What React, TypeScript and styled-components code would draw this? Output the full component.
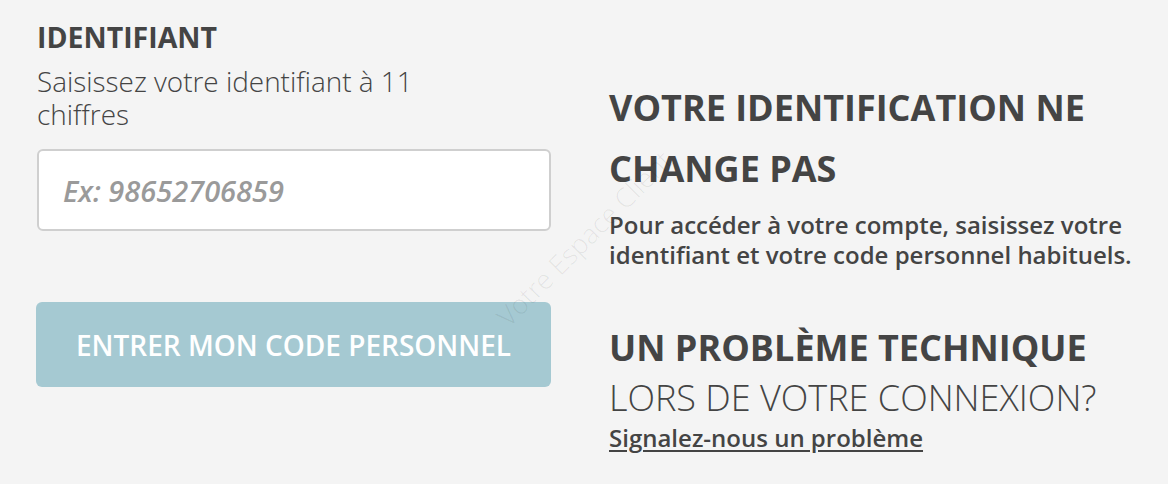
import React from "react";
import styled, { createGlobalStyle } from "styled-components";

const Global = createGlobalStyle`
  html, body { margin: 0; padding: 0; background: #f4f4f4; }
  body { font-family: "Open Sans", "Liberation Sans", sans-serif; color: #444; }
  * { box-sizing: border-box; }
`;

const Page = styled.div`
  position: relative;
  width: 1168px;
  height: 484px;
  overflow: hidden;
  display: flex;
  gap: 58px;
  padding: 17px 0 0 37px;
`;

const FormColumn = styled.div`
  width: 514px;
  flex-shrink: 0;
  display: flex;
  flex-direction: column;
`;

const FieldTitle = styled.div`
  font-size: 28.5px;
  font-weight: 700;
  line-height: 40px;
`;

const FieldHint = styled.div`
  font-size: 27.9px;
  font-weight: 300;
  line-height: 33px;
  max-width: 440px;
  margin-top: 8px;
`;

const Input = styled.input`
  margin-top: 18px;
  height: 82px;
  width: 100%;
  border: 2px solid #cfcfcf;
  border-radius: 6px;
  background: #fff;
  padding: 0 24px;
  font-family: "Open Sans", "Liberation Sans", sans-serif;
  font-size: 29px;
  color: #444;
  outline: none;
  &::placeholder {
    color: #9a9a9a;
    font-style: italic;
    font-weight: 600;
  }
`;

const SubmitButton = styled.button`
  margin-top: 71px;
  margin-left: -1px;
  height: 85px;
  width: 515px;
  border: none;
  border-radius: 6px;
  background: #a5c9d2;
  color: #fff;
  font-family: "Open Sans", "Liberation Sans", sans-serif;
  font-size: 28px;
  font-weight: 600;
`;

const InfoColumn = styled.div`
  flex: 1;
  display: flex;
  flex-direction: column;
  padding-top: 60px;
`;

const Heading = styled.div`
  font-size: 36px;
  font-weight: 700;
  line-height: 61px;
`;

const Paragraph = styled.p`
  margin: 11px 0 0;
  font-size: 24px;
  font-weight: 600;
  line-height: 30px;
`;

const HelpBlock = styled.div`
  margin-top: 53px;
  display: flex;
  flex-direction: column;
  align-items: flex-start;
`;

const HelpTitle = styled.div`
  font-size: 36px;
  font-weight: 700;
  line-height: 50px;
`;

const HelpSub = styled.div`
  font-size: 36px;
  font-weight: 300;
  line-height: 50px;
`;

const HelpLink = styled.a`
  font-size: 24px;
  font-weight: 600;
  line-height: 30px;
  color: #444;
  text-decoration: underline;
  text-underline-offset: 3px;
`;

const Watermark = styled.div`
  position: absolute;
  left: 584px;
  top: 238px;
  font-size: 27px;
  font-weight: 300;
  color: rgba(0, 0, 0, 0.07);
  transform: translate(-50%, -50%) rotate(-45deg);
  white-space: nowrap;
  pointer-events: none;
`;

export default function App() {
  return (
    <>
      <Global />
      <Page>
        <FormColumn>
          <FieldTitle>IDENTIFIANT</FieldTitle>
          <FieldHint>Saisissez votre identifiant à 11 chiffres</FieldHint>
          <Input placeholder="Ex: 98652706859" />
          <SubmitButton>ENTRER MON CODE PERSONNEL</SubmitButton>
        </FormColumn>
        <InfoColumn>
          <Heading>
            VOTRE IDENTIFICATION NE
            <br />
            CHANGE PAS
          </Heading>
          <Paragraph>
            Pour accéder à votre compte, saisissez votre
            <br />
            identifiant et votre code personnel habituels.
          </Paragraph>
          <HelpBlock>
            <HelpTitle>UN PROBLÈME TECHNIQUE</HelpTitle>
            <HelpSub>LORS DE VOTRE CONNEXION?</HelpSub>
            <HelpLink href="#">Signalez-nous un problème</HelpLink>
          </HelpBlock>
        </InfoColumn>
        <Watermark>Votre Espace Client</Watermark>
      </Page>
    </>
  );
}
